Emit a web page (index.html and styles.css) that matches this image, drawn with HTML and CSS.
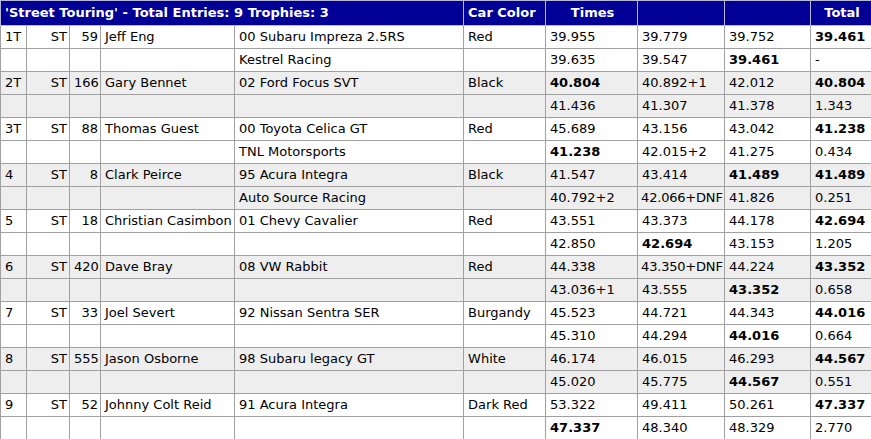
FILE: index.html
```html
<!DOCTYPE html>
<html>
<head>
<meta charset="utf-8">
<link rel="stylesheet" href="styles.css">
</head>
<body>
<table class="results">
<colgroup>
<col class="c-pos"><col class="c-cls"><col class="c-num"><col class="c-name"><col class="c-car"><col class="c-color"><col class="c-t1"><col class="c-t2"><col class="c-t3"><col class="c-tot">
</colgroup>
<thead>
<tr class="head">
<th colspan="5" class="left">'Street Touring' - Total Entries: 9 Trophies: 3</th>
<th class="left">Car Color</th>
<th>Times</th><th></th><th></th><th>Total</th>
</tr>
</thead>
<tbody>
<tr class="odd"><td>1T</td><td class="r">ST</td><td class="r">59</td><td>Jeff Eng</td><td>00 Subaru Impreza 2.5RS</td><td>Red</td><td>39.955</td><td>39.779</td><td>39.752</td><td class="b">39.461</td></tr>
<tr class="odd"><td></td><td></td><td></td><td></td><td>Kestrel Racing</td><td></td><td>39.635</td><td>39.547</td><td class="b">39.461</td><td>-</td></tr>
<tr class="even"><td>2T</td><td class="r">ST</td><td class="r">166</td><td>Gary Bennet</td><td>02 Ford Focus SVT</td><td>Black</td><td class="b">40.804</td><td>40.892+1</td><td>42.012</td><td class="b">40.804</td></tr>
<tr class="even"><td></td><td></td><td></td><td></td><td></td><td></td><td>41.436</td><td>41.307</td><td>41.378</td><td>1.343</td></tr>
<tr class="odd"><td>3T</td><td class="r">ST</td><td class="r">88</td><td>Thomas Guest</td><td>00 Toyota Celica GT</td><td>Red</td><td>45.689</td><td>43.156</td><td>43.042</td><td class="b">41.238</td></tr>
<tr class="odd"><td></td><td></td><td></td><td></td><td>TNL Motorsports</td><td></td><td class="b">41.238</td><td>42.015+2</td><td>41.275</td><td>0.434</td></tr>
<tr class="even"><td>4</td><td class="r">ST</td><td class="r">8</td><td>Clark Peirce</td><td>95 Acura Integra</td><td>Black</td><td>41.547</td><td>43.414</td><td class="b">41.489</td><td class="b">41.489</td></tr>
<tr class="even"><td></td><td></td><td></td><td></td><td>Auto Source Racing</td><td></td><td>40.792+2</td><td class="tight">42.066+DNF</td><td>41.826</td><td>0.251</td></tr>
<tr class="odd"><td>5</td><td class="r">ST</td><td class="r">18</td><td>Christian Casimbon</td><td>01 Chevy Cavalier</td><td>Red</td><td>43.551</td><td>43.373</td><td>44.178</td><td class="b">42.694</td></tr>
<tr class="odd"><td></td><td></td><td></td><td></td><td></td><td></td><td>42.850</td><td class="b">42.694</td><td>43.153</td><td>1.205</td></tr>
<tr class="even"><td>6</td><td class="r">ST</td><td class="r">420</td><td>Dave Bray</td><td>08 VW Rabbit</td><td>Red</td><td>44.338</td><td class="tight">43.350+DNF</td><td>44.224</td><td class="b">43.352</td></tr>
<tr class="even"><td></td><td></td><td></td><td></td><td></td><td></td><td>43.036+1</td><td>43.555</td><td class="b">43.352</td><td>0.658</td></tr>
<tr class="odd"><td>7</td><td class="r">ST</td><td class="r">33</td><td>Joel Severt</td><td>92 Nissan Sentra SER</td><td>Burgandy</td><td>45.523</td><td>44.721</td><td>44.343</td><td class="b">44.016</td></tr>
<tr class="odd"><td></td><td></td><td></td><td></td><td></td><td></td><td>45.310</td><td>44.294</td><td class="b">44.016</td><td>0.664</td></tr>
<tr class="even"><td>8</td><td class="r">ST</td><td class="r">555</td><td>Jason Osborne</td><td>98 Subaru legacy GT</td><td>White</td><td>46.174</td><td>46.015</td><td>46.293</td><td class="b">44.567</td></tr>
<tr class="even"><td></td><td></td><td></td><td></td><td></td><td></td><td>45.020</td><td>45.775</td><td class="b">44.567</td><td>0.551</td></tr>
<tr class="odd"><td>9</td><td class="r">ST</td><td class="r">52</td><td>Johnny Colt Reid</td><td>91 Acura Integra</td><td>Dark Red</td><td>53.322</td><td>49.411</td><td>50.261</td><td class="b">47.337</td></tr>
<tr class="odd"><td></td><td></td><td></td><td></td><td></td><td></td><td class="b">47.337</td><td>48.340</td><td>48.329</td><td>2.770</td></tr>
</tbody>
</table>
</body>
</html>
```
FILE: styles.css
```css
html, body {
  margin: 0;
  padding: 0;
  background: #ffffff;
}
.results {
  border-collapse: collapse;
  table-layout: fixed;
  width: 871px;
  font-family: "DejaVu Sans", Verdana, sans-serif;
  font-size: 13px;
  color: #000;
}
.c-pos { width: 26px; }
.c-cls { width: 43px; }
.c-num { width: 31px; }
.c-name { width: 134px; }
.c-car { width: 229px; }
.c-color { width: 82px; }
.c-t1 { width: 92px; }
.c-t2 { width: 87px; }
.c-t3 { width: 86px; }
.c-tot { width: 61px; }
.results td, .results th {
  border: 1px solid #a0a0a0;
  padding: 3px 2px 3px 4px;
  line-height: 16px;
  height: 16px;
  white-space: nowrap;
  overflow: hidden;
  text-align: left;
  vertical-align: middle;
}
.results td.tight {
  padding-left: 3px;
  padding-right: 0;
  letter-spacing: -0.2px;
}
.results .head th {
  background: #000096;
  color: #ffffff;
  font-weight: bold;
  text-align: center;
  padding-top: 4px;
  padding-bottom: 4px;
  border-color: #b8b8d8;
}
.results .head th.left { text-align: left; }
.results td.r { text-align: right; }
.results td.b { font-weight: bold; }
.odd td { background: #ffffff; }
.even td { background: #eeeeee; }
```
